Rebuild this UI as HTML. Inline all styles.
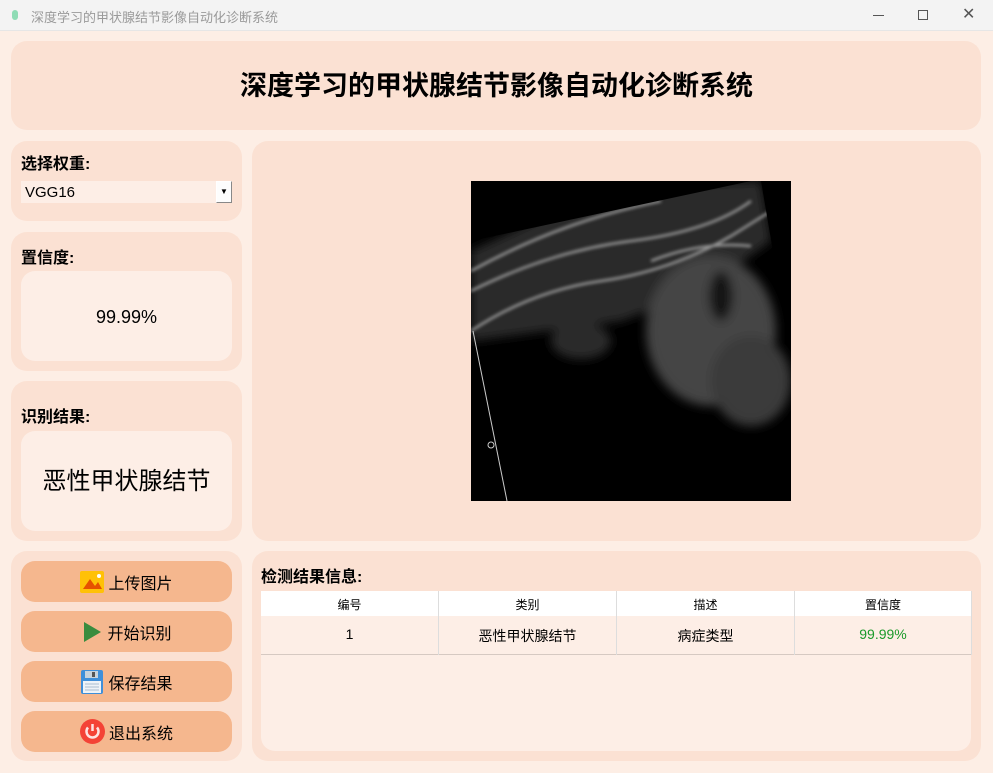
<!DOCTYPE html>
<html><head><meta charset="utf-8"><style>
*{margin:0;padding:0;box-sizing:border-box}
body{width:993px;height:773px;overflow:hidden;background:#fdeee5;font-family:"Liberation Sans","Noto Sans CJK SC",sans-serif;position:relative;color:#000}
.a{position:absolute}
.tb{left:0;top:0;width:993px;height:31px;background:#f3f3f3;border-bottom:1px solid #e6e6e6}
.p{background:#fbe1d3;border-radius:16px}
.in{background:#fdeee6;border-radius:14px}
.lbl{font-size:16px;font-weight:bold}
.btn{left:21px;width:211px;height:41px;background:#f5b78e;border-radius:14px;font-size:16px;display:flex;align-items:center;justify-content:center;gap:4px}
.cell{position:absolute;text-align:center;font-size:12px}
</style></head><body>
<div class="a tb">
 <div class="a" style="left:12px;top:10px;width:6px;height:10px;border-radius:3px;background:#8fdcb5"></div>
 <div class="a" style="left:31px;top:7px;font-size:13px;color:#9a9a9a">深度学习的甲状腺结节影像自动化诊断系统</div>
 <div class="a" style="left:873px;top:15px;width:11px;height:1px;background:#555"></div>
 <div class="a" style="left:918px;top:10px;width:10px;height:10px;border:1px solid #555"></div>
 <div class="a" style="left:962px;top:7px;font-size:16px;color:#555;line-height:16px">✕</div>
</div>
<div class="a p" style="left:11px;top:41px;width:970px;height:89px"></div>
<div class="a" style="left:0;top:64px;width:993px;text-align:center;font-size:27px;font-weight:bold">深度学习的甲状腺结节影像自动化诊断系统</div>

<div class="a p" style="left:11px;top:141px;width:231px;height:80px"></div>
<div class="a lbl" style="left:21px;top:150px">选择权重:</div>
<div class="a" style="left:21px;top:181px;width:211px;height:22px;background:#fdeee6;font-size:15px;padding:3px 0 0 4px">VGG16</div>
<div class="a" style="left:216px;top:181px;width:16px;height:22px;background:#fdfdfd;border:1px solid #888;border-top-color:#fff;border-left-color:#fff;font-size:8px;text-align:center;line-height:20px">▼</div>

<div class="a p" style="left:11px;top:232px;width:231px;height:139px"></div>
<div class="a lbl" style="left:21px;top:244px">置信度:</div>
<div class="a in" style="left:21px;top:271px;width:211px;height:90px;text-align:center;font-size:18px;line-height:92px">99.99%</div>

<div class="a p" style="left:11px;top:381px;width:231px;height:160px"></div>
<div class="a lbl" style="left:21px;top:403px">识别结果:</div>
<div class="a in" style="left:21px;top:431px;width:211px;height:100px;text-align:center;font-size:24px;line-height:102px">恶性甲状腺结节</div>

<div class="a p" style="left:11px;top:551px;width:231px;height:210px"></div>
<div class="a btn" style="top:561px"><svg width="24" height="22"><rect width="24" height="22" rx="2" fill="#ffc107"/><path d="M3 18 L10 8 L15 15 L18 11 L22 18Z" fill="#e65100"/><circle cx="19" cy="5" r="2" fill="#fff"/></svg>上传图片</div>
<div class="a btn" style="top:611px"><svg width="22" height="22"><path d="M3 1 L20 11 L3 21Z" fill="#3a8c3e"/></svg>开始识别</div>
<div class="a btn" style="top:661px"><svg width="24" height="24"><rect x="1" y="0" width="22" height="24" rx="2" fill="#3f8fd9"/><rect x="5" y="1" width="13" height="7" fill="#c9d3dc"/><rect x="12" y="2" width="3" height="5" fill="#555"/><rect x="3" y="11" width="18" height="12" fill="#eef3f8"/><path d="M5 14h14M5 17h14M5 20h14" stroke="#a9bccf"/></svg>保存结果</div>
<div class="a btn" style="top:711px"><svg width="25" height="25"><circle cx="12.5" cy="12.5" r="12.5" fill="#f44336"/><path d="M8 8.5 A6 6 0 1 0 17 8.5" fill="none" stroke="#fff" stroke-width="2.5" opacity=".85"/><path d="M12.5 5 V12" stroke="#fff" stroke-width="2.5" opacity=".85"/></svg>退出系统</div>

<div class="a p" style="left:252px;top:141px;width:729px;height:400px"></div>
<div class="a" style="left:471px;top:181px;width:320px;height:320px;background:#000;overflow:hidden">
<svg width="320" height="320">
<defs><filter id="b"><feGaussianBlur stdDeviation="5"/></filter><filter id="b2"><feGaussianBlur stdDeviation="1.5"/></filter></defs>
<g filter="url(#b)">
<path d="M0 70 L140 5 L290 0 L300 60 L230 110 L150 140 L0 160Z" fill="#2c2c2c"/>
<ellipse cx="240" cy="150" rx="65" ry="75" fill="#444"/>
<ellipse cx="280" cy="200" rx="40" ry="45" fill="#3a3a3a"/>
<ellipse cx="110" cy="160" rx="30" ry="18" fill="#2a2a2a"/>
<ellipse cx="250" cy="115" rx="12" ry="25" fill="#181818"/>
</g>
<g filter="url(#b2)" fill="none" stroke="#999" stroke-width="2.5">
<path d="M0 150 Q60 110 130 100 T260 55 L300 30"/>
<path d="M0 110 Q80 70 160 60 T280 20"/>
<path d="M0 90 Q90 40 190 20"/>
<path d="M180 80 Q230 60 280 65"/>
</g>
<path d="M0 60 L280 0 L290 0 L305 88 L320 160 L320 0 L0 0Z" fill="#000"/>
<path d="M2 150 L36 320" stroke="#ccc" stroke-width="1"/>
<circle cx="20" cy="264" r="3" fill="none" stroke="#ccc"/>
</svg></div>

<div class="a p" style="left:252px;top:551px;width:729px;height:210px"></div>
<div class="a lbl" style="left:261px;top:563px">检测结果信息:</div>
<div class="a" style="left:261px;top:591px;width:710px;height:160px;background:#fdeee6;border-radius:0 0 14px 14px"></div>
<div class="a" style="left:261px;top:591px;width:710px;height:25px;background:#fff"></div>
<div class="a" style="left:261px;top:654px;width:710px;height:1px;background:#d6c9c2"></div>
<div class="a" style="left:438px;top:591px;width:1px;height:64px;background:#ddd"></div>
<div class="a" style="left:616px;top:591px;width:1px;height:64px;background:#ddd"></div>
<div class="a" style="left:794px;top:591px;width:1px;height:64px;background:#ddd"></div>
<div class="a" style="left:971px;top:591px;width:1px;height:64px;background:#ddd"></div>
<div class="cell" style="left:261px;top:596px;width:177px">编号</div>
<div class="cell" style="left:439px;top:596px;width:177px">类别</div>
<div class="cell" style="left:617px;top:596px;width:177px">描述</div>
<div class="cell" style="left:795px;top:596px;width:176px">置信度</div>
<div class="cell" style="left:261px;top:626px;width:177px;font-size:14px">1</div>
<div class="cell" style="left:439px;top:626px;width:177px;font-size:14px">恶性甲状腺结节</div>
<div class="cell" style="left:617px;top:626px;width:177px;font-size:14px">病症类型</div>
<div class="cell" style="left:795px;top:626px;width:176px;font-size:14px;color:#1a9a2a">99.99%</div>
</body></html>
